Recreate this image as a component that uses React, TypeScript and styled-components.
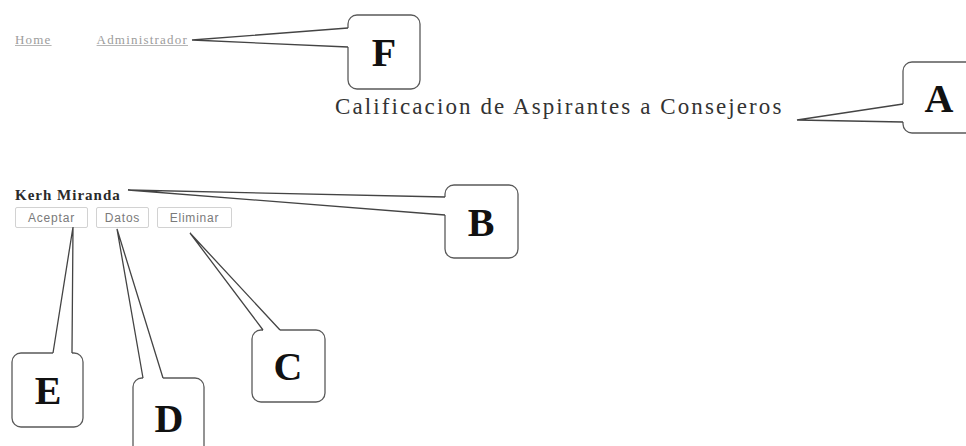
import React from "react"
import styled, { createGlobalStyle } from "styled-components"

const GlobalStyle = createGlobalStyle`
    html, body {
        margin:0;
        padding:0;
        background:#fff;
    }
    body {
        font-family:"Liberation Serif", "Times New Roman", serif;
    }
`

const Page = styled.div`
    position:relative;
    width:966px;
    height:446px;
    overflow:hidden;
    background:#fff;
`
const Nav = styled.nav`
    display:flex;
    gap:45px;
    padding:33px 0 0 15px;
`
const NavLink = styled.a`
    font-size:13px;
    line-height:14px;
    color:#9c9c9c;
    letter-spacing:1.2px;
    text-decoration:underline;
    text-decoration-color:#b5b5b5;
`
const Title = styled.h1`
    margin:47px 0 0 335px;
    font-size:23px;
    line-height:26px;
    font-weight:400;
    color:#333;
    letter-spacing:2.1px;
    white-space:nowrap;
`
const Candidate = styled.div`
    margin-top:67px;
    padding-left:15px;
`
const Name = styled.div`
    font-size:15px;
    line-height:17px;
    font-weight:700;
    color:#2a2a2a;
    letter-spacing:1px;
`
const ButtonRow = styled.div`
    display:flex;
    gap:8px;
    margin-top:3px;
`
const Button = styled.button<{ $w: number }>`
    width:${p => p.$w}px;
    height:21px;
    padding:0;
    border:1px solid #d2d2d2;
    border-radius:2px;
    background:#fff;
    font-family:"Liberation Sans", Arial, sans-serif;
    font-size:12px;
    letter-spacing:0.8px;
    color:#7a7a7a;
`
const Overlay = styled.svg`
    position:absolute;
    left:0;
    top:0;
    pointer-events:none;
`
const Letter = styled.text`
    font-family:"Liberation Serif", "Times New Roman", serif;
    font-weight:700;
    font-size:40px;
    fill:#111;
`

type Pt = [number, number]
type Note = {
    label: string
    x: number
    y: number
    w: number
    h: number
    a1: Pt
    a2: Pt
    tip: Pt
    side: "left" | "top"
}

const notes: Note[] = [
    { label: "F", x: 348, y: 15, w: 72, h: 74, a1: [348, 28], a2: [348, 47], tip: [192, 40], side: "left" },
    { label: "A", x: 903, y: 62, w: 100, h: 71, a1: [903, 104], a2: [903, 122], tip: [797, 120], side: "left" },
    { label: "B", x: 445, y: 185, w: 73, h: 73, a1: [445, 197], a2: [445, 215], tip: [128, 190], side: "left" },
    { label: "E", x: 12, y: 353, w: 71, h: 74, a1: [53, 353], a2: [72, 353], tip: [73, 227], side: "top" },
    { label: "D", x: 133, y: 378, w: 71, h: 80, a1: [143, 378], a2: [163, 378], tip: [117, 229], side: "top" },
    { label: "C", x: 252, y: 330, w: 73, h: 72, a1: [263, 330], a2: [280, 330], tip: [190, 233], side: "top" },
]

const Callout: React.FC<{ note: Note }> = ({ note }) => {
    const { x, y, w, h, a1, a2, tip, side, label } = note
    const d = side === "left" ? [3, 0] : [0, 3]
    const cover = `${tip[0]},${tip[1]} ${a1[0]},${a1[1]} ${a1[0] + d[0]},${a1[1] + d[1]} ${a2[0] + d[0]},${a2[1] + d[1]} ${a2[0]},${a2[1]}`
    return (
        <g>
            <rect x={x} y={y} width={w} height={h} rx={9} fill="#fff" stroke="#5a5a5a" strokeWidth={1.3} />
            <polygon points={cover} fill="#fff" />
            <polyline points={`${a1[0]},${a1[1]} ${tip[0]},${tip[1]} ${a2[0]},${a2[1]}`} fill="none" stroke="#444" strokeWidth={1.3} strokeLinejoin="miter" />
            <Letter x={x + 36} y={y + h / 2 + 14} textAnchor="middle">{label}</Letter>
        </g>
    )
}

const App: React.FC = () => {
    return (
        <Page>
            <GlobalStyle />
            <Nav>
                <NavLink href="#">Home</NavLink>
                <NavLink href="#">Administrador</NavLink>
            </Nav>
            <Title>Calificacion de Aspirantes a Consejeros</Title>
            <Candidate>
                <Name>Kerh Miranda</Name>
                <ButtonRow>
                    <Button $w={73}>Aceptar</Button>
                    <Button $w={53}>Datos</Button>
                    <Button $w={75}>Eliminar</Button>
                </ButtonRow>
            </Candidate>
            <Overlay width={966} height={446}>
                {notes.map(n => (
                    <Callout key={n.label} note={n} />
                ))}
            </Overlay>
        </Page>
    )
}
export default App
